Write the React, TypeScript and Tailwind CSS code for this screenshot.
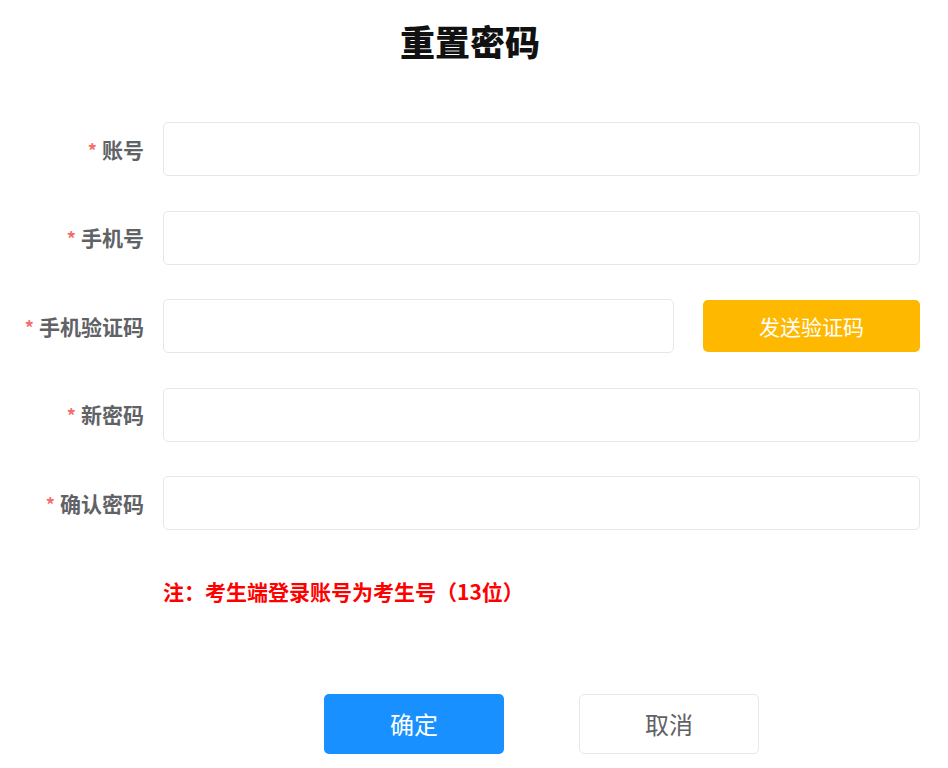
import React from "react";

const font = { fontFamily: '"Noto Sans CJK SC", "Noto Sans", sans-serif' };

function Label({ text }: { text: string }) {
  return (
    <div className="w-[144px] shrink-0 text-right text-[21px] font-bold text-[#606266] leading-none">
      <span className="text-[#f56c6c] mr-[5px] text-[18px]">*</span>
      {text}
    </div>
  );
}

function Field({ label }: { label: string }) {
  return (
    <div className="flex items-center">
      <Label text={label} />
      <input className="ml-[19px] flex-1 h-[54px] rounded-[5px] border border-[#e4e7ed] bg-white outline-none px-4" />
    </div>
  );
}

export default function App() {
  return (
    <div className="w-[948px] h-[768px] bg-white relative overflow-hidden" style={font}>
      <h1 className="pt-[20px] text-center pr-[8px] text-[35px] font-black leading-[42px] text-[#111]">重置密码</h1>
      <div className="mt-[60px] pr-[28px] flex flex-col gap-[34.5px]">
        <Field label="账号" />
        <Field label="手机号" />
        <div className="flex items-center">
          <Label text="手机验证码" />
          <input className="ml-[19px] w-[511px] h-[54px] rounded-[5px] border border-[#e4e7ed] bg-white outline-none px-4" />
          <button className="ml-[29px] flex-1 h-[52px] rounded-[5px] bg-[#ffb800] text-white text-[21px] leading-none">
            发送验证码
          </button>
        </div>
        <Field label="新密码" />
        <Field label="确认密码" />
      </div>
      <div className="ml-[163px] mt-[49px] text-[21px] font-bold text-[#ff0000] leading-[24px]">
        注：考生端登录账号为考生号（13位）
      </div>
      <div className="ml-[163px] mr-[28px] mt-[91px] flex justify-center gap-[75px]">
        <button className="w-[180px] h-[60px] rounded-[5px] bg-[#1890ff] text-white text-[24px] leading-none">确定</button>
        <button className="w-[180px] h-[60px] rounded-[5px] bg-white border border-[#e4e7ed] text-[#606266] text-[24px] leading-none">取消</button>
      </div>
    </div>
  );
}
